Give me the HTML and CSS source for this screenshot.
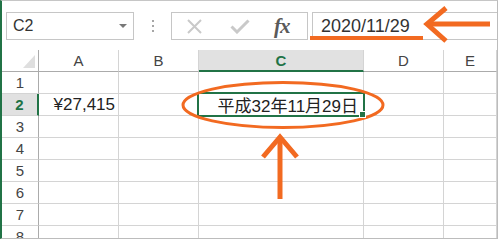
FILE: index.html
```html
<!DOCTYPE html>
<html>
<head>
  <meta charset="UTF-8">
  <title>Excel - C2</title>
  <link rel="stylesheet" href="styles.css">
</head>
<body>
  <div class="window">
    <!-- formula bar -->
    <div class="formula-bar">
      <div class="name-box"><span>C2</span><i class="caret"></i></div>
      <div class="grip"><i></i><i></i><i></i></div>
      <div class="fx-box">
        <svg class="icon-cancel" width="17" height="15" viewBox="0 0 17 15">
          <path d="M2 1 L15 14 M15 1 L2 14" stroke="#c9c9c9" stroke-width="2" fill="none"/>
        </svg>
        <svg class="icon-enter" width="20" height="15" viewBox="0 0 20 15">
          <path d="M1.5 7.5 L7 13 L18.5 1.5" stroke="#c9c9c9" stroke-width="3" fill="none"/>
        </svg>
        <span class="fx">fx</span>
      </div>
      <div class="formula-input">2020/11/29</div>
    </div>

    <!-- sheet -->
    <div class="sheet">
      <div class="corner"><i></i></div>
      <div class="ch">A</div>
      <div class="ch">B</div>
      <div class="ch sel">C</div>
      <div class="ch">D</div>
      <div class="ch">E</div>

      <div class="rh">1</div>
      <div class="cell"></div><div class="cell"></div><div class="cell"></div><div class="cell"></div><div class="cell"></div>

      <div class="rh sel">2</div>
      <div class="cell num">¥27,415</div>
      <div class="cell"></div>
      <div class="cell num active">平成32年11月29日<i class="handle"></i></div>
      <div class="cell"></div>
      <div class="cell"></div>

      <div class="rh">3</div>
      <div class="cell"></div><div class="cell"></div><div class="cell"></div><div class="cell"></div><div class="cell"></div>
      <div class="rh">4</div>
      <div class="cell"></div><div class="cell"></div><div class="cell"></div><div class="cell"></div><div class="cell"></div>
      <div class="rh">5</div>
      <div class="cell"></div><div class="cell"></div><div class="cell"></div><div class="cell"></div><div class="cell"></div>
      <div class="rh">6</div>
      <div class="cell"></div><div class="cell"></div><div class="cell"></div><div class="cell"></div><div class="cell"></div>
      <div class="rh">7</div>
      <div class="cell"></div><div class="cell"></div><div class="cell"></div><div class="cell"></div><div class="cell"></div>
      <div class="rh">8</div>
      <div class="cell"></div><div class="cell"></div><div class="cell"></div><div class="cell"></div><div class="cell"></div>
    </div>
  </div>

  <!-- orange annotations -->
  <svg class="marks" width="500" height="240" viewBox="0 0 500 240">
    <g stroke="#f26a21" fill="none">
      <rect x="310" y="36" width="113" height="4" fill="#f26a21" stroke="none"/>
      <line x1="428" y1="24" x2="490" y2="24" stroke-width="5"/>
      <polyline points="446,8 427,24 446,41" stroke-width="5"/>
      <ellipse cx="283" cy="105" rx="100" ry="22.5" stroke-width="3"/>
      <line x1="280" y1="137" x2="280" y2="199" stroke-width="5"/>
      <polyline points="263,157 280,137 297,157" stroke-width="5"/>
    </g>
  </svg>
</body>
</html>
```

FILE: styles.css
```css
body {
  margin: 0;
  position: relative;
  width: 500px;
  height: 240px;
  overflow: hidden;
  background-color: #ffffff;
  font-family: "Liberation Sans", Arial, sans-serif;
}
.window {
  width: 498px;
  height: 239px;
  box-sizing: border-box;
  border-top: 1px solid #c6c6c6;
  border-left: 2px solid #217346;
  border-right: 1px solid #bcbcbc;
  border-bottom: 1px solid #bcbcbc;
  overflow: hidden;
}

/* Formula bar */
.formula-bar {
  display: flex;
  padding-top: 11px;
  height: 28px;
}
.name-box {
  margin-left: 4px;
  width: 128px;
  box-sizing: border-box;
  border: 1px solid #c6c6c6;
  display: flex;
  align-items: center;
  justify-content: space-between;
  padding: 0 6px;
  font-size: 16px;
  color: #333333;
}
.caret {
  width: 0;
  height: 0;
  border-left: 4px solid transparent;
  border-right: 4px solid transparent;
  border-top: 4px solid #787878;
}
.grip {
  width: 37px;
  display: flex;
  flex-direction: column;
  align-items: center;
  justify-content: center;
  gap: 3px;
}
.grip i {
  width: 2px;
  height: 2px;
  background-color: #a6a6a6;
}
.fx-box {
  width: 137px;
  box-sizing: border-box;
  border: 1px solid #c6c6c6;
  display: flex;
  align-items: center;
}
.icon-cancel { margin-left: 14px; }
.icon-enter { margin-left: 27px; }
.fx {
  margin-left: 24px;
  font-family: "Liberation Serif", "Times New Roman", serif;
  font-style: italic;
  font-weight: bold;
  font-size: 21px;
  color: #5a5a5a;
  letter-spacing: -1px;
}
.formula-input {
  margin-left: 4px;
  flex: 1;
  border: 1px solid #c6c6c6;
  border-right: none;
  padding-left: 8px;
  display: flex;
  align-items: center;
  font-size: 18px;
  color: #333333;
}

/* Sheet grid */
.sheet {
  margin-top: 10px;
  display: grid;
  grid-template-columns: 37px 80px 80px 165px 80px 1fr;
  grid-auto-rows: 22px;
}
.sheet > div {
  box-sizing: border-box;
  border-right: 1px solid #d4d4d4;
  border-bottom: 1px solid #d4d4d4;
}
.corner {
  position: relative;
  border-right-color: #ababab !important;
  border-bottom-color: #ababab !important;
}
.corner i {
  position: absolute;
  right: 3px;
  bottom: 3px;
  width: 0;
  height: 0;
  border-left: 12px solid transparent;
  border-bottom: 13px solid #dfdfdf;
}
.ch {
  display: flex;
  align-items: center;
  justify-content: center;
  font-size: 15px;
  color: #444444;
  border-bottom-color: #ababab !important;
}
.ch.sel {
  background-color: #e1e1e1;
  color: #217346;
  font-weight: bold;
  border-bottom: 2px solid #217346 !important;
}
.rh {
  display: flex;
  align-items: center;
  justify-content: center;
  font-size: 15px;
  color: #444444;
  border-right-color: #ababab !important;
}
.rh.sel {
  background-color: #e1e1e1;
  color: #217346;
  font-weight: bold;
  border-right: 2px solid #217346 !important;
}
.num {
  display: flex;
  align-items: center;
  justify-content: flex-end;
  padding-right: 3px;
  font-family: "Liberation Sans", "Noto Sans CJK JP", sans-serif;
  font-size: 17px;
  color: #222222;
}
.active {
  position: relative;
  padding-right: 5px;
}
.active::after {
  content: "";
  position: absolute;
  top: -2px;
  left: -2px;
  right: -2px;
  bottom: -2px;
  border: 2px solid #217346;
}
.handle {
  position: absolute;
  right: -3px;
  bottom: -3px;
  width: 5px;
  height: 5px;
  background-color: #217346;
  border: 1px solid #ffffff;
  z-index: 1;
}

.marks {
  position: absolute;
  top: 0;
  left: 0;
  pointer-events: none;
}
```
